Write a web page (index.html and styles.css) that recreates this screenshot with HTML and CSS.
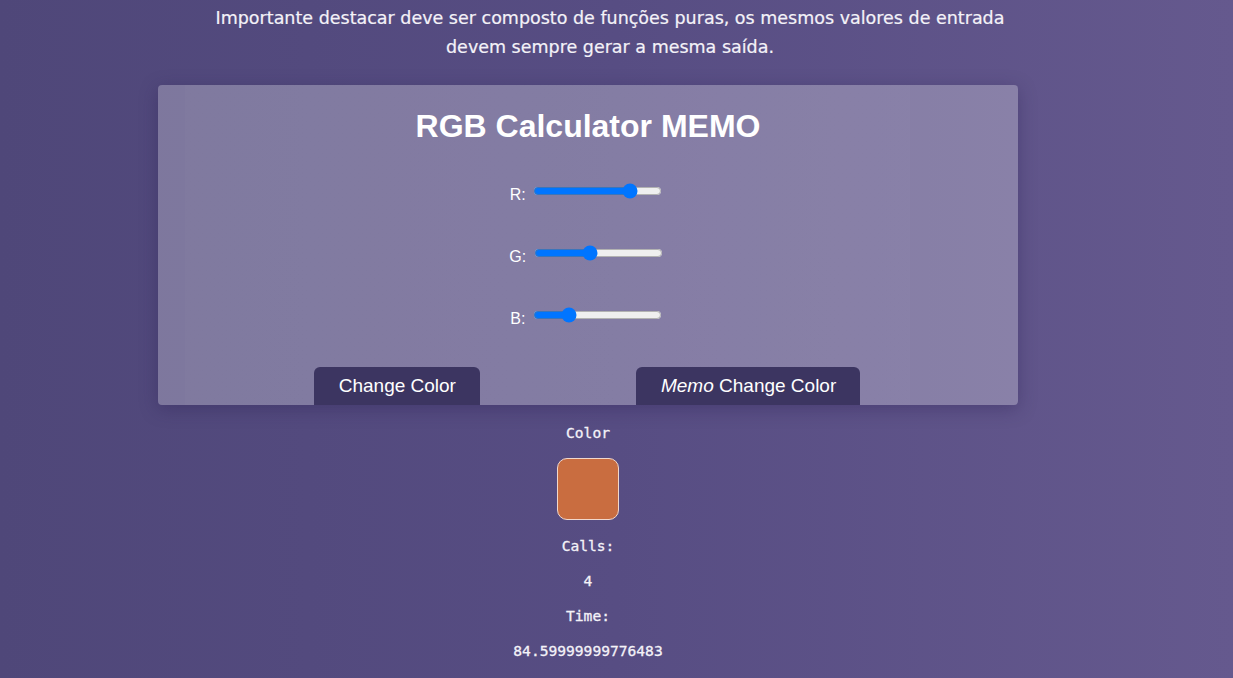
FILE: index.html
```html
<!DOCTYPE html>
<html lang="pt">
<head>
<meta charset="utf-8">
<title>RGB Calculator MEMO</title>
<link rel="stylesheet" href="styles.css">
</head>
<body>
<div class="page">
  <p class="intro">Importante destacar deve ser composto de funções puras, os mesmos valores de entrada devem sempre gerar a mesma saída.</p>
  <section class="card">
    <h1 class="title">RGB Calculator MEMO</h1>
    <div class="sliders">
      <label class="row">R: <input type="range" min="0" max="255" value="201"></label>
      <label class="row">G: <input type="range" min="0" max="255" value="109"></label>
      <label class="row">B: <input type="range" min="0" max="255" value="64"></label>
    </div>
    <div class="buttons">
      <button class="btn">Change Color</button>
      <button class="btn"><em>Memo</em> Change Color</button>
    </div>
  </section>
  <div class="result">
    <div class="mono">Color</div>
    <div class="swatch"></div>
    <div class="mono">Calls:</div>
    <div class="mono">4</div>
    <div class="mono">Time:</div>
    <div class="mono">84.59999999776483</div>
  </div>
</div>
</body>
</html>
```
FILE: styles.css
```css
html, body {
  margin: 0;
  height: 100%;
}
body {
  background: linear-gradient(90deg, #4f4779 0%, #574d83 50%, #65598e 100%);
  color: #f4f2f8;
  overflow: hidden;
}
.page {
  display: flex;
  flex-direction: column;
}
.intro {
  font-family: "DejaVu Sans", sans-serif;
  font-size: 17.5px;
  line-height: 29px;
  text-align: center;
  width: 820px;
  margin: 4px 0 0 200px;
  -webkit-text-stroke: 0.2px #f4f2f8;
}
.card {
  width: 860px;
  height: 320px;
  margin: 23px 0 0 158px;
  background:
    linear-gradient(90deg, rgba(255,255,255,0) 0, rgba(255,255,255,0) 27px, rgba(255,255,255,0.015) 27px, rgba(255,255,255,0.015) 752px, rgba(255,255,255,0) 752px),
    rgba(255, 255, 255, 0.26);
  border-radius: 4px;
  box-shadow: 0 4px 18px rgba(40, 30, 80, 0.35);
  overflow: hidden;
  box-sizing: border-box;
  padding-top: 23px;
  display: flex;
  flex-direction: column;
  align-items: center;
}
.title {
  font-family: "Liberation Sans", Arial, sans-serif;
  font-weight: bold;
  font-size: 32px;
  margin: 0;
  line-height: 37px;
  color: #ffffff;
}
.sliders {
  display: flex;
  flex-direction: column;
  align-items: center;
  gap: 40px;
  margin-top: 38px;
}
.row {
  font-family: "Liberation Sans", Arial, sans-serif;
  font-size: 16px;
  color: #ffffff;
  height: 22px;
  display: block;
  margin-left: -4px;
}
.row input {
  width: 129px;
  margin: 0 0 0 3px;
  accent-color: #0075ff;
  vertical-align: 1px;
}
.buttons {
  display: flex;
  justify-content: center;
  gap: 156px;
  margin-top: 38px;
  margin-left: -2px;
}
.btn {
  font-family: "Liberation Sans", Arial, sans-serif;
  font-size: 19px;
  color: #ffffff;
  background: #3c3561;
  border: none;
  border-radius: 6px 6px 0 0;
  height: 44px;
  padding: 0 24px 6px 25px;
  cursor: pointer;
}
.result {
  width: 860px;
  margin-left: 158px;
  display: flex;
  flex-direction: column;
  align-items: center;
  padding-top: 19px;
}
.mono {
  font-family: "DejaVu Sans Mono", monospace;
  font-size: 14.6px;
  line-height: 18px;
  height: 35px;
  color: #f4f2f8;
  -webkit-text-stroke: 0.3px #f4f2f8;
}
.swatch {
  width: 60px;
  height: 60px;
  background: #c96d40;
  border: 1px solid #f1d8cc;
  border-radius: 10px;
  margin: -1px 0 17px;
}
```
